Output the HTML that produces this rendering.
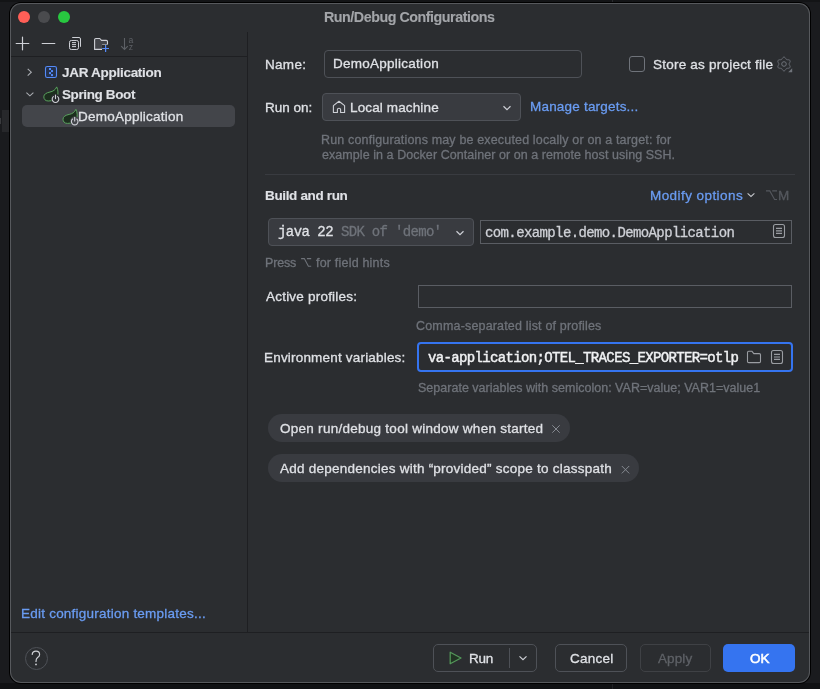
<!DOCTYPE html>
<html><head><meta charset="utf-8">
<style>
html,body{margin:0;padding:0;}
body{width:820px;height:689px;overflow:hidden;background:#1b1c1f;position:relative;font-family:"Liberation Sans",sans-serif;}
.a{position:absolute;box-sizing:border-box;}
.t{position:absolute;white-space:pre;line-height:1;will-change:transform;-webkit-text-stroke:0.3px currentColor;}
svg{position:absolute;overflow:visible;will-change:transform;}
</style></head><body>
<!-- backdrop -->
<div class="a" style="left:0;top:0;width:820px;height:689px;background:#1a1b1e"></div>
<div class="a" style="left:0;top:683px;width:820px;height:6px;background:#101113"></div>
<div class="a" style="left:2px;top:110px;width:7px;height:22px;background:#27282b"></div>
<div class="a" style="left:0;top:118px;width:1px;height:6px;background:#3a3b3e"></div>
<div class="a" style="left:612px;top:684px;width:1px;height:5px;background:#1f2023"></div>
<div class="a" style="left:0;top:0;width:820px;height:2px;background:#131416"></div>
<div class="a" style="left:612px;top:0;width:1px;height:2px;background:#2a2b2e"></div>
<!-- window -->
<div class="a" style="left:9px;top:2px;width:802px;height:682px;background:#000;border-radius:12px"></div>
<div class="a" style="left:10px;top:3px;width:800px;height:680px;background:#57595d;border-radius:11px"></div>
<div class="a" style="left:11px;top:4px;width:798px;height:678px;background:#2b2d30;border-radius:10px"></div>
<!-- traffic lights -->
<div class="a" style="left:18px;top:11px;width:12px;height:12px;border-radius:50%;background:#ff5f57"></div>
<div class="a" style="left:38px;top:11px;width:12px;height:12px;border-radius:50%;background:#4a4b4e"></div>
<div class="a" style="left:58px;top:11px;width:12px;height:12px;border-radius:50%;background:#28c840"></div>
<!-- separators -->
<div class="a" style="left:247px;top:32px;width:1px;height:600px;background:#1e1f22"></div>
<div class="a" style="left:11px;top:56px;width:236px;height:1px;background:#1e1f22"></div>
<div class="a" style="left:11px;top:632px;width:798px;height:1px;background:#1e1f22"></div>
<div class="a" style="left:265px;top:174px;width:530px;height:1px;background:#393b40"></div>
<!-- tree selection -->
<div class="a" style="left:22px;top:105px;width:213px;height:22px;border-radius:5px;background:#43454a"></div>
<!-- inputs -->
<div class="a" style="left:324px;top:50px;width:258px;height:28px;border:1px solid #4e5157;border-radius:4px"></div>
<div class="a" style="left:322px;top:93px;width:199px;height:28px;border:1px solid #4e5157;border-radius:4px;background:#393b40"></div>
<div class="a" style="left:629px;top:56px;width:16px;height:16px;border:1px solid #6f737a;border-radius:3px"></div>
<div class="a" style="left:268px;top:218px;width:206px;height:28px;border:1px solid #4e5157;border-radius:4px;background:#393b40"></div>
<div class="a" style="left:480px;top:220px;width:312px;height:24px;border:1px solid #5a5d63"></div>
<div class="a" style="left:418px;top:285px;width:374px;height:23px;border:1px solid #5a5d63"></div>
<div class="a" style="left:417px;top:342px;width:376px;height:30px;border:2px solid #3574f0;border-radius:4px"></div>
<!-- chips -->
<div class="a" style="left:268px;top:414px;width:302px;height:28px;border-radius:14px;background:#393b40"></div>
<div class="a" style="left:268px;top:454px;width:371px;height:28px;border-radius:14px;background:#393b40"></div>
<!-- buttons -->
<div class="a" style="left:433px;top:644px;width:104px;height:28px;border:1px solid #4e5157;border-radius:5px"></div>
<div class="a" style="left:509px;top:648px;width:1px;height:20px;background:#4e5157"></div>
<div class="a" style="left:555px;top:644px;width:72px;height:28px;border:1px solid #4e5157;border-radius:5px"></div>
<div class="a" style="left:640px;top:644px;width:71px;height:28px;border:1px solid #3f4145;border-radius:5px"></div>
<div class="a" style="left:723px;top:644px;width:72px;height:28px;border-radius:5px;background:#3574f0"></div>
<!-- help -->
<div class="a" style="left:24.5px;top:646.5px;width:23px;height:23px;border:1px solid #4e5157;border-radius:50%"></div>
<!-- toolbar -->
<svg style="left:0;top:0" width="820" height="689" viewBox="0 0 820 689">
 <g fill="none" stroke="#ced0d6" stroke-width="1.2" stroke-linecap="round">
  <path d="M16.2 43.5H28.8M22.5 37.2V49.8"/>
  <path d="M42.2 43.5H54.8"/>
 </g>
 <g fill="none" stroke="#ced0d6" stroke-width="1">
  <rect x="69.5" y="40.5" width="9" height="9" rx="1.8"/>
  <path d="M72.2 37.5H79Q80.5 37.5 80.5 39V46.8"/>
  <path d="M72 42.6H76M72 44.6H76M72 46.6H76"/>
 </g>
 <path d="M94.6 49.4V39.8Q94.6 38.5 95.9 38.5H99.8L101.5 40.4H106.3Q107.5 40.4 107.5 41.6V44.5H102.5V49.4Z" fill="#43454a" stroke="#ced0d6" stroke-width="1.1" stroke-linejoin="round"/>
 <path d="M102 44.6H109.5V52H102Z" fill="#2b2d30"/>
 <path d="M102.2 48.5H109M105.6 45V52" stroke="#548af7" stroke-width="1.2" fill="none"/>
 <g fill="none" stroke="#5e6166" stroke-width="1.1">
  <path d="M124.5 38V49.5M121.2 46.2L124.5 49.5L127.8 46.2"/>
 </g>
 <text x="128.4" y="43.2" font-family="'Liberation Sans',sans-serif" font-size="8.6" fill="#5e6166">a</text>
 <text x="128.7" y="50" font-family="'Liberation Sans',sans-serif" font-size="8.6" fill="#5e6166">z</text>
 <!-- tree chevrons -->
 <path d="M27.7 68.8L31.3 72.2L27.7 75.6" fill="none" stroke="#a9acb1" stroke-width="1.1"/>
 <path d="M26.4 92.6L29.9 95.8L33.4 92.6" fill="none" stroke="#a9acb1" stroke-width="1.1"/>
 <!-- JAR icon -->
 <rect x="45.5" y="66.5" width="11" height="11" rx="1.8" fill="#25324d" stroke="#548af7" stroke-width="1.1"/>
 <rect x="49" y="68" width="2" height="2" fill="#548af7"/>
 <rect x="51" y="70.1" width="2" height="2" fill="#548af7"/>
 <rect x="49" y="72.1" width="2" height="2" fill="#548af7"/>
 <rect x="51" y="74.1" width="2" height="2" fill="#548af7"/>
 <!-- house -->
 <path d="M333.4 112.5V105.6L339 101.2L344.6 105.6V112.5H340.6V109.6Q340.6 108.3 339 108.3Q337.4 108.3 337.4 109.6V112.5Z" fill="none" stroke="#ced0d6" stroke-width="1.1" stroke-linejoin="round"/>
 <!-- combo chevrons -->
 <path d="M503.5 106.3L507 109.6L510.5 106.3" fill="none" stroke="#ced0d6" stroke-width="1.2"/>
 <path d="M456.5 231.2L460 234.6L463.5 231.2" fill="none" stroke="#ced0d6" stroke-width="1.2"/>
 <path d="M747.6 193.3L751 196.5L754.4 193.3" fill="none" stroke="#c4c6cb" stroke-width="1.05"/>
 <path d="M519.5 656.4L523 659.7L526.5 656.4" fill="none" stroke="#ced0d6" stroke-width="1.2"/>
 <!-- option key shortcut -->
 <path d="M766 190.9H769.8L774.6 199.5H777M772.2 190.9H777" fill="none" stroke="#55585e" stroke-width="1.1"/>
 <path d="M301.1 258.6H304.3L308.4 266.2H311.2M306.9 258.6H311.2" fill="none" stroke="#6f737a" stroke-width="1.1"/>
 <!-- doc icons -->
 <g fill="none" stroke="#9a9da2" stroke-width="1.1">
  <rect x="773.5" y="224.5" width="11" height="13" rx="2"/>
  <path d="M776 228.4H782M776 230.9H782M776 233.4H782"/>
  <rect x="771.5" y="350.5" width="11" height="13" rx="2"/>
  <path d="M774 354.4H780M774 357H780M774 359.4H780"/>
  <path d="M747.5 361.4V352.4Q747.5 351.2 748.7 351.2H751.8L753.8 353.6H759.3Q760.5 353.6 760.5 354.8V361.4Q760.5 362.6 759.3 362.6H748.7Q747.5 362.6 747.5 361.4Z" stroke-linejoin="round"/>
 </g>
 <!-- chip x -->
 <path d="M552.3 425.3L559.7 432.7M559.7 425.3L552.3 432.7" stroke="#868a91" stroke-width="1" fill="none"/>
 <path d="M621.8 466L629.2 473.4M629.2 466L621.8 473.4" stroke="#868a91" stroke-width="1" fill="none"/>
 <!-- play -->
 <path d="M450.2 652.2L461 658L450.2 663.8Z" fill="#213323" stroke="#54985a" stroke-width="1.25" stroke-linejoin="round"/>
 <!-- gear -->
 <g transform="translate(777,57)">
  <path d="M12.10,7.00 L12.14,7.27 L12.24,7.55 L12.40,7.86 L12.60,8.19 L12.80,8.55 L12.97,8.94 L13.10,9.34 L13.15,9.74 L13.11,10.11 L12.98,10.45 L12.75,10.73 L12.44,10.95 L12.07,11.11 L11.67,11.20 L11.24,11.24 L10.83,11.25 L10.44,11.25 L10.10,11.27 L9.80,11.31 L9.55,11.42 L9.34,11.58 L9.14,11.82 L8.96,12.11 L8.77,12.44 L8.55,12.80 L8.31,13.14 L8.02,13.45 L7.70,13.69 L7.36,13.85 L7.00,13.90 L6.64,13.85 L6.30,13.69 L5.98,13.45 L5.69,13.14 L5.45,12.80 L5.23,12.44 L5.04,12.11 L4.86,11.82 L4.66,11.58 L4.45,11.42 L4.20,11.31 L3.90,11.27 L3.56,11.25 L3.17,11.25 L2.76,11.24 L2.33,11.20 L1.93,11.11 L1.56,10.95 L1.25,10.73 L1.02,10.45 L0.89,10.11 L0.85,9.74 L0.90,9.34 L1.03,8.94 L1.20,8.55 L1.40,8.19 L1.60,7.86 L1.76,7.55 L1.86,7.27 L1.90,7.00 L1.86,6.73 L1.76,6.45 L1.60,6.14 L1.40,5.81 L1.20,5.45 L1.03,5.06 L0.90,4.66 L0.85,4.26 L0.89,3.89 L1.02,3.55 L1.25,3.27 L1.56,3.05 L1.93,2.89 L2.33,2.80 L2.76,2.76 L3.17,2.75 L3.56,2.75 L3.90,2.73 L4.20,2.69 L4.45,2.58 L4.66,2.42 L4.86,2.18 L5.04,1.89 L5.23,1.56 L5.45,1.20 L5.69,0.86 L5.98,0.55 L6.30,0.31 L6.64,0.15 L7.00,0.10 L7.36,0.15 L7.70,0.31 L8.02,0.55 L8.31,0.86 L8.55,1.20 L8.77,1.56 L8.96,1.89 L9.14,2.18 L9.34,2.42 L9.55,2.58 L9.80,2.69 L10.10,2.73 L10.44,2.75 L10.83,2.75 L11.24,2.76 L11.67,2.80 L12.07,2.89 L12.44,3.05 L12.75,3.27 L12.98,3.55 L13.11,3.89 L13.15,4.26 L13.10,4.66 L12.97,5.06 L12.80,5.45 L12.60,5.81 L12.40,6.14 L12.24,6.45 L12.14,6.73 L12.10,7.00Z" fill="none" stroke="#6f737a" stroke-width="1"/>
  <circle cx="7" cy="7" r="2.3" fill="none" stroke="#6f737a" stroke-width="1"/>
 </g>
 <path d="M792.2 68.2V72.2H788.2Z" fill="#6f737a"/>
 <!-- help ? -->
 <path d="M32.2 654.4Q32.6 651.2 36 651.2Q39.6 651.2 39.6 654.4Q39.6 656.2 37.6 657.6Q36 658.8 36 661.4" fill="none" stroke="#cfd1d5" stroke-width="1.2" stroke-linecap="round"/>
 <circle cx="36" cy="664.4" r="0.9" fill="#cfd1d5"/>
 <!-- spring icons -->
 <g id="spr" transform="translate(43,86)">
  <path d="M5.2 15C2.2 15 0.8 13 0.8 10.8C0.9 8.2 3.2 6.8 7 6C10 5.4 12.4 4 13.7 0.9C15.2 4 15.4 8 14.2 10.8C12.8 13.6 9.4 15 5.2 15Z" fill="#1c2e1e" stroke="#5aa35e" stroke-width="1" stroke-linejoin="round"/>
  <circle cx="12.5" cy="12.6" r="4.6" fill="#2b2d30"/>
  <path d="M10.4 10.6A3.3 3.3 0 1 0 14.6 10.6" fill="none" stroke="#ced0d6" stroke-width="1.1" stroke-linecap="round"/>
  <path d="M12.5 9V12.6" fill="none" stroke="#ced0d6" stroke-width="1.1" stroke-linecap="round"/>
 </g>
 <g transform="translate(62.2,108.4)">
  <path d="M5.2 15C2.2 15 0.8 13 0.8 10.8C0.9 8.2 3.2 6.8 7 6C10 5.4 12.4 4 13.7 0.9C15.2 4 15.4 8 14.2 10.8C12.8 13.6 9.4 15 5.2 15Z" fill="#1c2e1e" stroke="#5aa35e" stroke-width="1" stroke-linejoin="round"/>
  <circle cx="12.5" cy="12.6" r="4.6" fill="#43454a"/>
  <path d="M10.4 10.6A3.3 3.3 0 1 0 14.6 10.6" fill="none" stroke="#ced0d6" stroke-width="1.1" stroke-linecap="round"/>
  <path d="M12.5 9V12.6" fill="none" stroke="#ced0d6" stroke-width="1.1" stroke-linecap="round"/>
 </g>
</svg>

<div class="t" id="t0" style="left:323.60px;top:9.50px;font-size:14.3px;font-weight:700;color:#a3a5a9;font-family:'Liberation Sans', sans-serif;letter-spacing:-0.478px;-webkit-text-stroke:0.1px currentColor">Run/Debug Configurations</div>
<div class="t" id="t1" style="left:62.00px;top:66.00px;font-size:13.5px;font-weight:700;color:#dfe1e5;font-family:'Liberation Sans', sans-serif;letter-spacing:-0.286px;-webkit-text-stroke:0.1px currentColor">JAR Application</div>
<div class="t" id="t2" style="left:62.00px;top:88.00px;font-size:13.5px;font-weight:700;color:#dfe1e5;font-family:'Liberation Sans', sans-serif;letter-spacing:-0.380px;-webkit-text-stroke:0.1px currentColor">Spring Boot</div>
<div class="t" id="t3" style="left:78.40px;top:110.00px;font-size:13.5px;font-weight:400;color:#dfe1e5;font-family:'Liberation Sans', sans-serif;letter-spacing:0.229px">DemoApplication</div>
<div class="t" id="t4" style="left:264.70px;top:57.80px;font-size:13.5px;font-weight:400;color:#dfe1e5;font-family:'Liberation Sans', sans-serif;letter-spacing:0.300px">Name:</div>
<div class="t" id="t5" style="left:332.50px;top:56.80px;font-size:13.5px;font-weight:400;color:#dfe1e5;font-family:'Liberation Sans', sans-serif;letter-spacing:0.257px">DemoApplication</div>
<div class="t" id="t6" style="left:652.50px;top:58.20px;font-size:13.5px;font-weight:400;color:#dfe1e5;font-family:'Liberation Sans', sans-serif;letter-spacing:0.220px">Store as project file</div>
<div class="t" id="t7" style="left:264.70px;top:100.80px;font-size:13.5px;font-weight:400;color:#dfe1e5;font-family:'Liberation Sans', sans-serif;letter-spacing:0.000px">Run on:</div>
<div class="t" id="t8" style="left:349.50px;top:100.80px;font-size:13.5px;font-weight:400;color:#dfe1e5;font-family:'Liberation Sans', sans-serif;letter-spacing:0.133px">Local machine</div>
<div class="t" id="t9" style="left:529.90px;top:100.00px;font-size:13.5px;font-weight:400;color:#6a9cf2;font-family:'Liberation Sans', sans-serif;letter-spacing:0.200px">Manage targets...</div>
<div class="t" id="t10" style="left:320.70px;top:134.00px;font-size:12.5px;font-weight:400;color:#6f737a;font-family:'Liberation Sans', sans-serif;letter-spacing:0.157px">Run configurations may be executed locally or on a target: for</div>
<div class="t" id="t11" style="left:321.70px;top:148.70px;font-size:12.5px;font-weight:400;color:#6f737a;font-family:'Liberation Sans', sans-serif;letter-spacing:0.061px">example in a Docker Container or on a remote host using SSH.</div>
<div class="t" id="t12" style="left:264.60px;top:189.00px;font-size:13.5px;font-weight:700;color:#dfe1e5;font-family:'Liberation Sans', sans-serif;letter-spacing:-0.350px;-webkit-text-stroke:0.1px currentColor">Build and run</div>
<div class="t" id="t13" style="left:649.70px;top:189.00px;font-size:13.5px;font-weight:400;color:#6a9cf2;font-family:'Liberation Sans', sans-serif;letter-spacing:0.431px">Modify options</div>
<div class="t" id="t14" style="left:264.70px;top:256.70px;font-size:12.5px;font-weight:400;color:#6f737a;font-family:'Liberation Sans', sans-serif;letter-spacing:-0.150px">Press</div>
<div class="t" id="t15" style="left:316.10px;top:256.70px;font-size:12.5px;font-weight:400;color:#6f737a;font-family:'Liberation Sans', sans-serif;letter-spacing:0.200px">for field hints</div>
<div class="t" id="t16" style="left:777.90px;top:189.00px;font-size:13.5px;font-weight:400;color:#55585e;font-family:'Liberation Sans', sans-serif;letter-spacing:0.000px">M</div>
<div class="t" id="t17" style="left:265.70px;top:290.30px;font-size:13.5px;font-weight:400;color:#dfe1e5;font-family:'Liberation Sans', sans-serif;letter-spacing:0.213px">Active profiles:</div>
<div class="t" id="t18" style="left:415.70px;top:320.10px;font-size:12.5px;font-weight:400;color:#6f737a;font-family:'Liberation Sans', sans-serif;letter-spacing:0.174px">Comma-separated list of profiles</div>
<div class="t" id="t19" style="left:264.40px;top:351.00px;font-size:13.5px;font-weight:400;color:#dfe1e5;font-family:'Liberation Sans', sans-serif;letter-spacing:0.190px">Environment variables:</div>
<div class="t" id="t20" style="left:417.90px;top:382.40px;font-size:12.5px;font-weight:400;color:#6f737a;font-family:'Liberation Sans', sans-serif;letter-spacing:0.014px">Separate variables with semicolon: VAR=value; VAR1=value1</div>
<div class="t" id="t21" style="left:279.50px;top:421.80px;font-size:13.5px;font-weight:400;color:#dfe1e5;font-family:'Liberation Sans', sans-serif;letter-spacing:0.268px">Open run/debug tool window when started</div>
<div class="t" id="t22" style="left:279.50px;top:461.90px;font-size:13.5px;font-weight:400;color:#dfe1e5;font-family:'Liberation Sans', sans-serif;letter-spacing:0.240px">Add dependencies with “provided” scope to classpath</div>
<div class="t" id="t23" style="left:20.60px;top:606.80px;font-size:13.5px;font-weight:400;color:#6a9cf2;font-family:'Liberation Sans', sans-serif;letter-spacing:0.227px">Edit configuration templates...</div>
<div class="t" id="t24" style="left:468.60px;top:651.80px;font-size:13.5px;font-weight:400;color:#dfe1e5;font-family:'Liberation Sans', sans-serif;letter-spacing:-0.300px">Run</div>
<div class="t" id="t25" style="left:570.10px;top:652.00px;font-size:13.5px;font-weight:400;color:#dfe1e5;font-family:'Liberation Sans', sans-serif;letter-spacing:0.240px">Cancel</div>
<div class="t" id="t26" style="left:658.20px;top:652.00px;font-size:13.5px;font-weight:400;color:#5e6166;font-family:'Liberation Sans', sans-serif;letter-spacing:0.100px">Apply</div>
<div class="t" id="t27" style="left:750.20px;top:652.00px;font-size:13.5px;font-weight:400;color:#ffffff;font-family:'Liberation Sans', sans-serif;letter-spacing:0.000px;-webkit-text-stroke:0.55px currentColor">OK</div>
<div class="t" id="t28" style="left:277.60px;top:225.40px;font-size:14px;font-weight:400;color:#dfe1e5;font-family:'Liberation Mono', monospace;letter-spacing:-0.533px">java 22</div>
<div class="t" id="t29" style="left:341.20px;top:225.40px;font-size:14px;font-weight:400;color:#6f737a;font-family:'Liberation Mono', monospace;letter-spacing:-0.683px">SDK of 'demo'</div>
<div class="t" id="t30" style="left:484.90px;top:226.10px;font-size:14px;font-weight:400;color:#ced0d6;font-family:'Liberation Mono', monospace;letter-spacing:-0.613px">com.example.demo.DemoApplication</div>
<div class="t" id="t31" style="left:427.60px;top:351.00px;font-size:14px;font-weight:400;color:#f0f1f3;font-family:'Liberation Mono', monospace;letter-spacing:-0.646px;-webkit-text-stroke:0.45px currentColor">va-application;OTEL_TRACES_EXPORTER=otlp</div>
</body></html>
